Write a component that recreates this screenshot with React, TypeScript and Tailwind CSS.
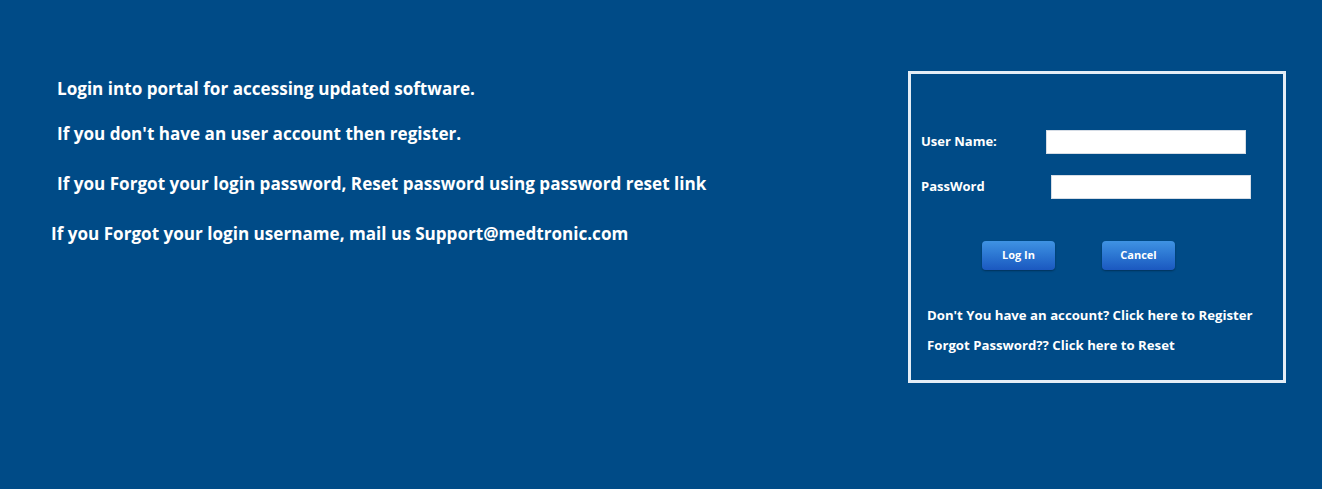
import { ReactElement } from "react";

const font = { fontFamily: '"Open Sans", "Liberation Sans", sans-serif' };

const infoLines = [
  { text: "Login into portal for accessing updated software.", cls: "pl-[57px] h-[22px]" },
  { text: "If you don't have an user account then register.", cls: "pl-[57px] h-[22px] mt-[23px]" },
  {
    text: "If you Forgot your login password, Reset password using password reset link",
    cls: "pl-[57px] h-[22px] mt-[28px]",
  },
  { text: "If you Forgot your login username, mail us Support@medtronic.com", cls: "pl-[51px] h-[22px] mt-[28px]" },
];

const GradientButton = ({ label }: { label: string }): ReactElement => (
  <button
    type="button"
    className="w-[73px] h-[29px] rounded-[4px] bg-gradient-to-b from-[#3f93e3] to-[#1b58c0] text-white text-[11px] font-bold shadow-[0_1px_2px_rgba(0,0,0,0.35)]"
  >
    {label}
  </button>
);

const App = (): ReactElement => {
  return (
    <div style={font} className="w-[1322px] h-[489px] bg-[#004b87] flex text-white">
      <div className="pt-[78px] flex flex-col text-[17.1px] font-bold leading-[22px]">
        {infoLines.map((line) => (
          <div key={line.text} className={line.cls + " whitespace-nowrap"}>
            {line.text}
          </div>
        ))}
      </div>

      <div className="ml-auto mr-[36px] mt-[71px] w-[378px] h-[312px] border-[3px] border-[#e4edf6] flex flex-col">
        <div className="mt-[56px] flex items-center pl-[10px] h-[24px]">
          <span className="w-[125px] text-[13px] font-bold">User Name:</span>
          <input className="w-[200px] h-[24px] bg-white border border-[#d6dde6] text-black outline-none" />
        </div>
        <div className="mt-[21px] flex items-center pl-[10px] h-[24px]">
          <span className="w-[130px] text-[13px] font-bold">PassWord</span>
          <input
            type="password"
            className="w-[200px] h-[24px] bg-white border border-[#d6dde6] text-black outline-none"
          />
        </div>

        <div className="mt-[42px] flex pl-[71px] gap-[47px]">
          <GradientButton label="Log In" />
          <GradientButton label="Cancel" />
        </div>

        <div className="mt-[36px] pl-[16px] flex flex-col gap-[12px] text-[13.2px] font-bold leading-[18px] whitespace-nowrap">
          <span>Don't You have an account? Click here to Register</span>
          <span>Forgot Password?? Click here to Reset</span>
        </div>
      </div>
    </div>
  );
};

export default App;
